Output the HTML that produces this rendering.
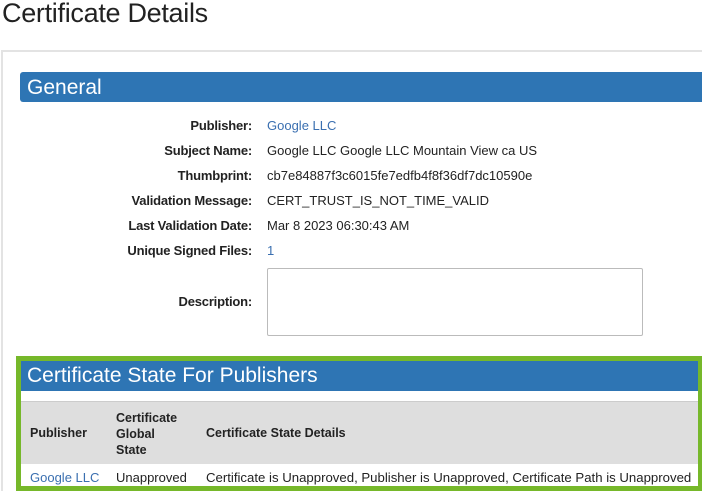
<!DOCTYPE html>
<html style="overflow:hidden;height:491px"><head><style>
body{margin:0;width:702px;height:491px;overflow:hidden;background:#fff;font-family:"Liberation Sans",sans-serif;position:relative}
.a{position:absolute}
h1{position:absolute;left:2px;top:-2px;margin:0;font-weight:300;font-size:27px;color:#222;letter-spacing:-0.3px}
.panel{left:1px;top:50px;width:720px;height:441px;border-top:2px solid #e3e3e3;border-left:2px solid #e3e3e3;box-sizing:border-box}
.hdr{background:#2e75b4;color:#fff;font-size:21px;font-weight:300}
.lbl{position:absolute;right:450px;font-size:13px;font-weight:bold;color:#222;white-space:nowrap;letter-spacing:-0.2px}
.val{position:absolute;left:267px;font-size:13px;color:#222;white-space:nowrap}
.lnk{color:#3a6fb0}
</style></head><body>
<h1>Certificate Details</h1>
<div class="a panel"></div>
<div class="a hdr" style="left:20px;top:72px;width:682px;height:30px;border-radius:3px 0 0 3px;line-height:31px;padding-left:7px;box-sizing:border-box">General</div>
<div class="lbl" style="top:118px">Publisher:</div><div class="val lnk" style="top:118px">Google LLC</div>
<div class="lbl" style="top:143px">Subject Name:</div><div class="val" style="top:143px">Google LLC Google LLC Mountain View ca US</div>
<div class="lbl" style="top:168px">Thumbprint:</div><div class="val" style="top:168px">cb7e84887f3c6015fe7edfb4f8f36df7dc10590e</div>
<div class="lbl" style="top:193px">Validation Message:</div><div class="val" style="top:193px">CERT_TRUST_IS_NOT_TIME_VALID</div>
<div class="lbl" style="top:218px">Last Validation Date:</div><div class="val" style="top:218px">Mar 8 2023 06:30:43 AM</div>
<div class="lbl" style="top:243px">Unique Signed Files:</div><div class="val lnk" style="top:243px">1</div>
<div class="lbl" style="top:294px">Description:</div>
<div class="a" style="left:267px;top:268px;width:374px;height:66px;border:1px solid #bbb;border-radius:2px"></div>
<div class="a" style="left:16px;top:356px;width:686px;height:135px;box-sizing:border-box;border:5px solid #76b82a;border-right-width:4px;background:#fff;overflow:hidden">
 <div class="hdr" style="height:30px;line-height:30px;padding-left:6px">Certificate State For Publishers</div>
 <div style="height:10px"></div>
 <div style="background:#dedede;height:62px;border-top:1px solid #ccc;position:relative">
  <div class="a" style="left:9px;top:24px;font-size:12.5px;font-weight:bold;color:#222">Publisher</div>
  <div class="a" style="left:95px;top:8px;font-size:12.5px;font-weight:bold;color:#222;line-height:16px">Certificate<br>Global<br>State</div>
  <div class="a" style="left:185px;top:24px;font-size:12.5px;font-weight:bold;color:#222">Certificate State Details</div>
 </div>
 <div style="position:relative;height:30px">
  <div class="a lnk" style="left:9px;top:6px;font-size:13px">Google LLC</div>
  <div class="a" style="left:95px;top:6px;font-size:13px;color:#222">Unapproved</div>
  <div class="a" style="left:185px;top:6px;font-size:13.2px;color:#222;white-space:nowrap">Certificate is Unapproved, Publisher is Unapproved, Certificate Path is Unapproved</div>
 </div>
</div>
</body></html>
